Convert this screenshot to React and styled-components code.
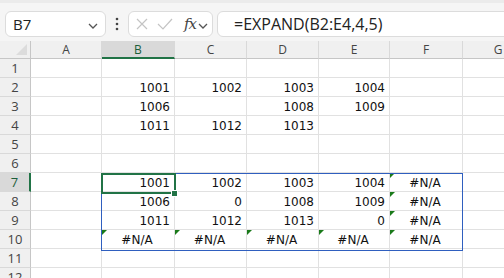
import React from 'react';
import styled, { createGlobalStyle } from 'styled-components';

const Global = createGlobalStyle`
  html, body { margin: 0; padding: 0; background: #fff; }
  body { width: 504px; height: 278px; overflow: hidden; }
`;

const Sheet = styled.div`
  width: 504px;
  height: 278px;
  overflow: hidden;
  background: #fff;
  font-family: "DejaVu Sans", sans-serif;
`;

const Toolbar = styled.div`
  height: 41px;
  box-sizing: border-box;
  background: #f5f5f5;
  border-top: 3px solid #ebebeb;
  display: flex;
  align-items: center;
  padding: 4px 0 0 5px;
`;

const Box = styled.div`
  height: 26px;
  box-sizing: border-box;
  background: #fff;
  border: 1px solid #dcdcdc;
  border-radius: 6px;
  display: flex;
  align-items: center;
  width: ${p => p.$w}px;
  flex: ${p => (p.$grow ? 1 : 'none')};
  margin-right: ${p => p.$mr || 0}px;
  padding-left: ${p => p.$pl || 0}px;
  font-family: "Open Sans", "Noto Sans", sans-serif;
  color: #222;
`;

const NameText = styled.span`
  font-size: 15px;
  flex: 1;
  padding-left: 7px;
`;

const Dots = styled.div`
  width: 22px;
  display: flex;
  justify-content: center;
`;

const Fx = styled.span`
  font-family: "DejaVu Serif", "Liberation Serif", serif;
  font-style: italic;
  font-size: 15px;
  color: #444;
  margin-left: 11px;
  letter-spacing: -1px;
`;

const Formula = styled.span`
  font-size: 16px;
  padding-left: 16px;
  white-space: nowrap;
`;

const Grid = styled.div`
  position: relative;
  display: grid;
  grid-template-columns: 31px 71px 73px 72px 72px 71px 73px 71px;
  grid-template-rows: 18px repeat(12, 19px);
`;

const Corner = styled.div`
  background: #f0f0f0;
  border-right: 1px solid #c6c6c6;
  border-bottom: 1px solid #c6c6c6;
  box-sizing: border-box;
  position: relative;
  &::after {
    content: '';
    position: absolute;
    right: 3px;
    bottom: 3px;
    border-style: solid;
    border-width: 0 0 11px 11px;
    border-color: transparent transparent #dcdcdc transparent;
  }
`;

const ColHead = styled.div`
  box-sizing: border-box;
  background: ${p => (p.$sel ? '#d9d9d9' : '#f0f0f0')};
  border-right: 1px solid #d9d9d9;
  border-bottom: ${p => (p.$sel ? '2px solid #217346' : '1px solid #c6c6c6')};
  display: flex;
  align-items: center;
  justify-content: center;
  font-family: "Open Sans", "Noto Sans", sans-serif;
  font-size: 12px;
  color: ${p => (p.$sel ? '#1c5e3a' : '#444')};
  padding-top: ${p => (p.$sel ? 1 : 0)}px;
`;

const RowHead = styled.div`
  box-sizing: border-box;
  background: ${p => (p.$sel ? '#d9d9d9' : '#f0f0f0')};
  border-right: ${p => (p.$sel ? '2px solid #217346' : '1px solid #c6c6c6')};
  border-bottom: 1px solid #d9d9d9;
  display: flex;
  align-items: center;
  justify-content: center;
  font-family: "Open Sans", "Noto Sans", sans-serif;
  font-size: 13px;
  color: ${p => (p.$sel ? '#1c5e3a' : '#444')};
`;

const Cell = styled.div`
  position: relative;
  box-sizing: border-box;
  border-right: 1px solid #e1e1e1;
  border-bottom: 1px solid #e1e1e1;
  display: flex;
  align-items: center;
  justify-content: ${p => (p.$center ? 'center' : 'flex-end')};
  padding: 1px 4px 0 2px;
  font-size: 12px;
  color: #111;
  white-space: nowrap;
`;

const Flag = styled.span`
  position: absolute;
  left: 0;
  top: 0;
  border-style: solid;
  border-width: 5px 5px 0 0;
  border-color: #1a7a1a transparent transparent transparent;
`;

const Range = styled.div`
  position: absolute;
  left: 101px;
  top: 132px;
  width: 362px;
  height: 78px;
  border: 1px solid #2f5fbf;
  box-sizing: border-box;
  pointer-events: none;
`;

const Active = styled.div`
  position: absolute;
  left: 101px;
  top: 132px;
  width: 75px;
  height: 21px;
  border: 2px solid #217346;
  box-sizing: border-box;
  pointer-events: none;
`;

const Handle = styled.div`
  position: absolute;
  left: 171px;
  top: 149px;
  width: 5px;
  height: 5px;
  background: #217346;
  border: 1px solid #fff;
`;

const cols = ['A', 'B', 'C', 'D', 'E', 'F', 'G'];

const data = {
  2: { B: '1001', C: '1002', D: '1003', E: '1004' },
  3: { B: '1006', D: '1008', E: '1009' },
  4: { B: '1011', C: '1012', D: '1013' },
  7: { B: '1001', C: '1002', D: '1003', E: '1004', F: '#N/A' },
  8: { B: '1006', C: '0', D: '1008', E: '1009', F: '#N/A' },
  9: { B: '1011', C: '1012', D: '1013', E: '0', F: '#N/A' },
  10: { B: '#N/A', C: '#N/A', D: '#N/A', E: '#N/A', F: '#N/A' },
};

const Chevron = () => (
  <svg width="12" height="8" viewBox="0 0 12 8">
    <path d="M2 2l4 4 4-4" fill="none" stroke="#555" strokeWidth="1.3" />
  </svg>
);

export default function App() {
  const rows = Array.from({ length: 12 }, (_, i) => i + 1);
  return (
    <Sheet>
      <Global />
      <Toolbar>
        <Box $w={101}>
          <NameText>B7</NameText>
          <span style={{ marginRight: 6 }}><Chevron /></span>
        </Box>
        <Dots>
          <svg width="4" height="14" viewBox="0 0 4 14">
            <circle cx="2" cy="2" r="1.3" fill="#444" />
            <circle cx="2" cy="7" r="1.3" fill="#444" />
            <circle cx="2" cy="12" r="1.3" fill="#444" />
          </svg>
        </Dots>
        <Box $w={85} $mr={4} $pl={6}>
          <svg width="14" height="14" viewBox="0 0 14 14">
            <path d="M2 2l10 10M12 2L2 12" stroke="#c4c4c4" strokeWidth="1.2" />
          </svg>
          <svg width="16" height="14" viewBox="0 0 16 14" style={{ marginLeft: 8 }}>
            <path d="M1 7l5 5 9-10" fill="none" stroke="#c4c4c4" strokeWidth="1.2" />
          </svg>
          <Fx>fx</Fx>
          <span style={{ marginLeft: 1 }}><Chevron /></span>
        </Box>
        <Box $grow style={{ marginRight: -10 }}>
          <Formula>=EXPAND(B2:E4,4,5)</Formula>
        </Box>
      </Toolbar>
      <Grid>
        <Corner />
        {cols.map(c => (
          <ColHead key={c} $sel={c === 'B'}>{c}</ColHead>
        ))}
        {rows.map(r => (
          <React.Fragment key={r}>
            <RowHead $sel={r === 7}>{r}</RowHead>
            {cols.map(c => {
              const v = data[r] && data[r][c];
              const na = v === '#N/A';
              const flag = (r >= 7 && r <= 9 && c === 'F') || (r === 10 && c !== 'A' && c !== 'G');
              return (
                <Cell key={c} $center={na}>
                  {flag && <Flag />}
                  {v}
                </Cell>
              );
            })}
          </React.Fragment>
        ))}
        <Range />
        <Active />
        <Handle />
      </Grid>
    </Sheet>
  );
}
